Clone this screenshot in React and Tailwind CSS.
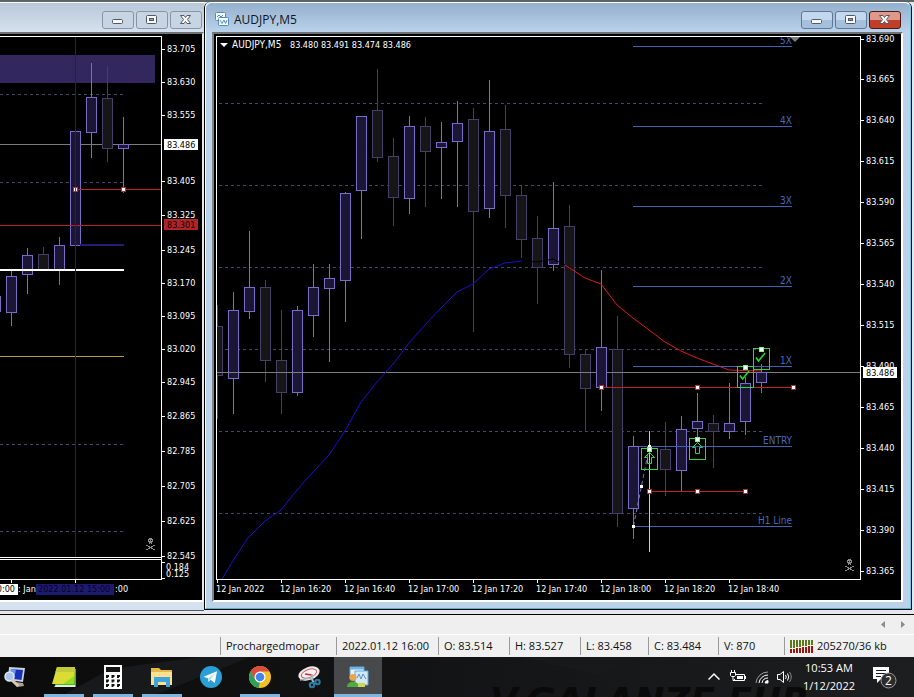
import { clsx } from "clsx";

const hourCandles = [
  { x: -5, high: 296, top: 296, bottom: 311, low: 311, up: true },
  { x: 11, high: 270, top: 276, bottom: 312, low: 325, up: true },
  { x: 27, high: 248, top: 255, bottom: 274, low: 293, up: true },
  { x: 43, high: 247, top: 254, bottom: 269, low: 269, up: false },
  { x: 59, high: 237, top: 245, bottom: 269, low: 284, up: true },
  { x: 75, high: 131, top: 131, bottom: 245, low: 245, up: true },
  { x: 91, high: 63, top: 97, bottom: 132, low: 157, up: true },
  { x: 107, high: 66, top: 98, bottom: 148, low: 161, up: false },
  { x: 123, high: 117, top: 144, bottom: 148, low: 192, up: true },
];

const m5Candles = [
  { x: 217, high: 305, top: 326, bottom: 375, low: 418, up: false },
  { x: 233, high: 292, top: 310, bottom: 378, low: 413, up: true },
  { x: 249, high: 231, top: 287, bottom: 311, low: 318, up: true },
  { x: 265, high: 280, top: 287, bottom: 360, low: 381, up: false },
  { x: 281, high: 310, top: 360, bottom: 392, low: 413, up: false },
  { x: 297, high: 306, top: 310, bottom: 392, low: 395, up: true },
  { x: 313, high: 264, top: 287, bottom: 315, low: 336, up: true },
  { x: 329, high: 264, top: 278, bottom: 288, low: 361, up: true },
  { x: 345, high: 192, top: 193, bottom: 280, low: 321, up: true },
  { x: 361, high: 116, top: 116, bottom: 190, low: 238, up: true },
  { x: 377, high: 69, top: 110, bottom: 157, low: 161, up: false },
  { x: 393, high: 138, top: 156, bottom: 197, low: 225, up: false },
  { x: 409, high: 116, top: 126, bottom: 198, low: 213, up: true },
  { x: 425, high: 117, top: 126, bottom: 151, low: 206, up: false },
  { x: 441, high: 122, top: 142, bottom: 147, low: 198, up: true },
  { x: 457, high: 101, top: 123, bottom: 141, low: 206, up: true },
  { x: 473, high: 108, top: 119, bottom: 211, low: 331, up: false },
  { x: 489, high: 80, top: 131, bottom: 208, low: 217, up: true },
  { x: 505, high: 105, top: 129, bottom: 195, low: 227, up: false },
  { x: 521, high: 186, top: 195, bottom: 239, low: 257, up: false },
  { x: 537, high: 216, top: 238, bottom: 267, low: 303, up: false },
  { x: 553, high: 182, top: 228, bottom: 264, low: 270, up: true },
  { x: 569, high: 205, top: 226, bottom: 354, low: 367, up: false },
  { x: 585, high: 350, top: 354, bottom: 388, low: 430, up: false },
  { x: 601, high: 270, top: 347, bottom: 387, low: 410, up: true },
  { x: 617, high: 316, top: 349, bottom: 513, low: 526, up: false },
  { x: 633, high: 436, top: 446, bottom: 508, low: 538, up: true },
  { x: 665, high: 422, top: 449, bottom: 469, low: 495, up: false },
  { x: 681, high: 416, top: 429, bottom: 470, low: 491, up: true },
  { x: 697, high: 393, top: 421, bottom: 428, low: 438, up: true },
  { x: 713, high: 415, top: 423, bottom: 431, low: 467, up: false },
  { x: 729, high: 383, top: 423, bottom: 431, low: 438, up: true },
  { x: 745, high: 377, top: 383, bottom: 421, low: 434, up: true },
  { x: 761, high: 364, top: 372, bottom: 382, low: 392, up: true },
];

const targets = [
  { y: 46, label: "5X" },
  { y: 126, label: "4X" },
  { y: 206, label: "3X" },
  { y: 286, label: "2X" },
  { y: 366, label: "1X" },
  { y: 446, label: "ENTRY" },
  { y: 526, label: "H1 Line" },
];

const hourPrices = [
  [49, "83.705"],
  [82, "83.630"],
  [115, "83.555"],
  [181, "83.405"],
  [215, "83.325"],
  [250, "83.245"],
  [283, "83.170"],
  [316, "83.095"],
  [349, "83.020"],
  [382, "82.945"],
  [416, "82.865"],
  [451, "82.785"],
  [486, "82.705"],
  [521, "82.625"],
  [556, "82.545"],
];

const m5Prices = [
  [39, "83.690"],
  [79, "83.665"],
  [120, "83.640"],
  [161, "83.615"],
  [202, "83.590"],
  [243, "83.565"],
  [284, "83.540"],
  [325, "83.515"],
  [366, "83.490"],
  [407, "83.465"],
  [448, "83.440"],
  [489, "83.415"],
  [530, "83.390"],
  [571, "83.365"],
];

const m5Times = [
  "12 Jan 2022",
  "12 Jan 16:20",
  "12 Jan 16:40",
  "12 Jan 17:00",
  "12 Jan 17:20",
  "12 Jan 17:40",
  "12 Jan 18:00",
  "12 Jan 18:20",
  "12 Jan 18:40",
];

const CHART_FONT = "font-['DejaVu_Sans_Condensed','DejaVu_Sans',sans-serif]";

const Candle = ({ x, high, top, bottom, low, up }) => {
  const stroke = up ? "#786cc8" : "#463d69";
  return (
    <g stroke={stroke}>
      <path d={`M${x + 0.5} ${high}V${top}M${x + 0.5} ${bottom}V${low + 1}`} />
      <rect
        x={x - 4.5}
        y={top + 0.5}
        width="10"
        height={bottom - top}
        fill={up ? "#1a1633" : "#161616"}
      />
    </g>
  );
};

const Level = ({ y, from, to, color, dashed }) => (
  <path
    d={`M${from} ${y + 0.5}H${to}`}
    stroke={color}
    strokeDasharray={dashed ? "3 3" : undefined}
  />
);

const Handle = ({ x, y, color = "#b03030" }) => (
  <rect x={x - 1.5} y={y - 1.5} width="4" height="4" fill="#fff" stroke={color} />
);

const SignalBox = ({ x, y, kind }) => (
  <g transform={`translate(${x} ${y})`} fill="none" stroke="#22e032">
    <rect x="0.5" y="0.5" width="16" height="21" />
    {kind === "arrow" ? (
      <path d="M8.5 4.5L13.5 9.5H10.5V15.5H6.5V9.5H3.5Z" />
    ) : (
      <path d="M3 9.5L5.5 13L12 5M4 11L5.5 13" strokeWidth="1.5" />
    )}
    <rect x="6.5" y="-0.5" width="4" height="4" fill="#fff" stroke="#7df58a" />
  </g>
);

const Skull = ({ x, y }) => (
  <g transform={`translate(${x} ${y})`}>
    <path
      d="M3 0H6V1H7V4H6V6H3V4H2V1H3ZM0 7H2V8H0ZM7 7H9V8H7ZM2 8H4V9H2ZM5 8H7V9H5ZM3 9H6V10H3ZM2 10H4V11H2ZM5 10H7V11H5ZM0 11H2V12H0ZM7 11H9V12H7Z"
      fill="#8d8d8d"
    />
    <path d="M3 2H4V3H3ZM5 2H6V3H5ZM4 5H5V6H4Z" fill="#000" />
  </g>
);

const PriceAxis = ({ prices, current, alert }) => (
  <svg
    className={clsx("w-10 flex-1 shrink-0 overflow-visible", CHART_FONT)}
    fontSize="9"
    fill="#fff"
    role="img"
    aria-label="Price scale"
  >
    <g transform="translate(0 -36)">
      {prices.map(([y, label]) => (
        <g key={label}>
          <path d={`M0 ${y + 0.5}h3`} stroke="#fff" />
          <text x="5" y={y + 3}>
            {label}
          </text>
        </g>
      ))}
      <rect x="2" y={current - 5} width="34" height="11" />
      <text x="5" y={current + 4} fill="#000">
        83.486
      </text>
      {alert && (
        <>
          <rect x="2" y={alert - 6} width="34" height="11" fill="#ae2429" />
          <text x="5" y={alert + 3} fill="#1a0000">
            83.301
          </text>
        </>
      )}
    </g>
  </svg>
);

const windowButtons = [
  {
    name: "Minimize",
    icon: <rect x="9.5" y="8.5" width="10" height="4" rx="1" />,
  },
  {
    name: "Maximize",
    icon: (
      <>
        <rect x="9.5" y="4.5" width="10" height="8" rx="1" />
        <rect x="12.5" y="7.5" width="4" height="2" fill="#8fa0b3" />
      </>
    ),
  },
  {
    name: "Close",
    icon: (
      <path d="M9.5 4.5H13L14.5 6.5L16 4.5H19.5L16.5 8.5L19.5 12.5H16L14.5 10.5L13 12.5H9.5L12.5 8.5Z" />
    ),
  },
];

const WindowButtons = ({ active }) => (
  <div className="flex gap-0.5">
    {windowButtons.map(({ name, icon }) => (
      <button
        key={name}
        type="button"
        aria-label={name}
        className={clsx(
          "h-[18px] w-8 overflow-hidden rounded-[3px] border",
          !active && "border-[#8696a8] bg-[#c7d5e3]",
          active &&
            name !== "Close" &&
            "border-[#5f7894] bg-linear-to-b from-[#c3d8ee] from-50% to-[#a5c0dd] to-50%",
          active &&
            name === "Close" &&
            "border-[#4a1a18] bg-linear-to-b from-[#e0988b] from-50% to-[#c23f27] to-50%",
        )}
      >
        <svg
          className="-mt-px block h-[18px] w-[30px]"
          fill="#f8f8f8"
          stroke="#4f5a66"
        >
          {icon}
        </svg>
      </button>
    ))}
  </div>
);

const HourWindow = () => (
  <section
    aria-label="Hourly chart"
    className="flex w-[204px] shrink-0 flex-col border-t border-white bg-[#d5e2ef]"
  >
    <header className="flex h-[29px] shrink-0 items-center justify-end bg-linear-to-b from-[#b8c8d8] to-[#d5e1ee] pt-1 pr-0.5">
      <WindowButtons />
    </header>
    <div className="flex flex-1 flex-col border-y-2 border-r-2 border-t-[#6f7274] border-r-[#e8e8ec] border-b-white bg-black pt-0.5">
      <div className="flex flex-1">
        <div className="flex flex-1 flex-col border-r border-white">
          <svg
            className="w-full flex-1 border-y border-white"
            fill="none"
            role="img"
            aria-label="Hourly candles"
          >
            <g transform="translate(0 -37)">
              <rect x="0" y="55" width="155" height="28" fill="#32285e" />
              {[94, 182, 444, 531].map((y) => (
                <Level key={y} y={y} from={0} to={126} color="#48466a" dashed />
              ))}
              <Level y={144} from={0} to={161} color="#7c7c7c" />
              {hourCandles.map((candle) => (
                <Candle key={candle.x} {...candle} />
              ))}
              <path d="M80 245H124" stroke="#231d78" strokeWidth="2" />
              <path d="M0 270H124" stroke="#fff" strokeWidth="2" />
              <Level y={356} from={0} to={124} color="#b5a13c" />
              <Level y={189} from={75} to={161} color="#b8202e" />
              <Level y={225} from={0} to={161} color="#b8202e" />
              <path d="M75.5 36V560" stroke="#221a80" />
              <Handle x={75} y={189} />
              <path d="M75.5 187V192" stroke="#a33a3a" />
              <Handle x={123} y={189} />
              <Skull x={146} y={538} />
            </g>
          </svg>
          <svg
            className="mt-px h-[21px] w-full shrink-0 border-y border-white"
            role="img"
            aria-label="Indicator"
          >
            <path d="M75.5 0V21" stroke="#221a80" />
          </svg>
        </div>
        <div className="flex w-10 flex-col">
          <PriceAxis prices={hourPrices} current={144} alert={225} />
          <svg
            className={clsx("h-5 w-10 shrink-0", CHART_FONT)}
            fontSize="9"
            fill="#fff"
          >
            <path d="M0 2.5h3M0 18.5h3" stroke="#fff" />
            <text x="4" y="10">
              0.184
            </text>
            <text x="4" y="17">
              0.125
            </text>
          </svg>
        </div>
      </div>
      <svg
        className={clsx("h-5 w-full shrink-0", CHART_FONT)}
        fontSize="9"
        fill="#fff"
        role="img"
        aria-label="Time scale"
      >
        <path d="M11.5 0V3M75.5 0V3" stroke="#fff" />
        <rect x="0" y="4" width="18" height="11" />
        <text x="15" y="12" fill="#000" textAnchor="end">
          0:00
        </text>
        <text x="18" y="12">
          : Jan
        </text>
        <rect x="36" y="4" width="78" height="11" fill="#1e1a70" />
        <text x="38" y="12" fill="#05041f">
          2022.01.12 15:00
        </text>
        <text x="115" y="12">
          :00
        </text>
      </svg>
    </div>
    <div className="h-[9px] shrink-0 border-b border-[#4d5a66]" />
  </section>
);

const M5Window = () => (
  <section
    aria-label="AUDJPY,M5"
    className="mr-0.5 flex min-w-0 flex-1 flex-col rounded-t-md border-x border-b border-black bg-[#bad2ea]"
  >
    <div className="flex flex-1 flex-col rounded-t-md border border-t-white border-r-[#5fd0ee] border-b-[#4fb4cc] border-l-white">
      <header className="flex h-[29px] shrink-0 items-center rounded-t-md bg-linear-to-b from-[#95b0cd] to-[#bad2eb] pt-1 pr-[9px] pl-2">
        <svg className="h-4 w-4 shrink-0" fill="#fff" stroke="#4f8cc8">
          <rect x="1.5" y="0.5" width="10" height="8" rx="1" />
          <path d="M3 5L5 3L7 5L9 3" fill="none" />
          <rect x="4.5" y="5.5" width="10" height="8" rx="1" />
          <path d="M6 8L8 11.5L10 8L11.5 11.5L13 8" fill="none" />
        </svg>
        <h1 className="ml-1 flex-1 font-['Open_Sans',sans-serif] text-[12px] leading-4 text-[#0d1520]">
          AUDJPY,M5
        </h1>
        <WindowButtons active />
      </header>
      <div className="mr-[7px] mb-1.5 ml-1.5 flex flex-1 flex-col border-2 border-t-[#6f7274] border-r-white border-b-white border-l-[#7d8287] bg-black pt-0.5 pl-0.5">
        <div className="flex flex-1">
          <svg
            className={clsx("min-w-0 flex-1 border border-white", CHART_FONT)}
            fill="none"
            fontSize="9"
            role="img"
            aria-label="AUDJPY five minute candles"
          >
            <g transform="translate(-217 -37)">
              {[103, 185, 267, 349, 431, 513].map((y) => (
                <Level key={y} y={y} from={219} to={763} color="#48466a" dashed />
              ))}
              {m5Candles.map((candle) => (
                <Candle key={candle.x} {...candle} />
              ))}
              <path d="M217 372.5H2000" stroke="#7c7c7c" />
              <g>
                <Candle x={601} high={347} top={347} bottom={387} low={387} up />
                <Candle x={745} high={383} top={383} bottom={421} low={421} up />
                <Candle x={761} high={372} top={372} bottom={382} low={382} up />
              </g>
              <polyline
                points="222,579 233,561 247,539 265,521 281,510 297,490 313,472 329,455 345,431 361,402 377,382 393,364 409,343 425,325 441,308 457,292 473,284 489,269 505,263 522,261"
                stroke="#1612d0"
              />
              <polyline points="522,261 537,262 553,259 565,265" stroke="#000" />
              <polyline
                points="565,265 585,278 601,284 617,305 633,318 649,330 665,342 681,351 697,358 713,364 729,370 761,371"
                stroke="#e01820"
              />
              {targets.map(({ y, label }) => (
                <g key={label}>
                  <Level
                    y={y}
                    from={label === "ENTRY" ? 639 : 633}
                    to={792}
                    color="#3f62b4"
                  />
                  <text
                    x="792"
                    y={y - 2}
                    fontSize="10"
                    textAnchor="end"
                    fill="#4a68bd"
                  >
                    {label}
                  </text>
                </g>
              ))}
              <Level y={387} from={601} to={794} color="#c4202c" />
              <Level y={491} from={649} to={746} color="#c4202c" />
              {[601, 697, 793].map((x) => (
                <Handle key={x} x={x} y={387} />
              ))}
              <path
                d="M633.5 526L649.5 446"
                stroke="#7d74b8"
                strokeDasharray="4 3"
              />
              <path d="M649.5 431V552" stroke="#c9c9c9" />
              {[649, 697, 745].map((x) => (
                <Handle key={x} x={x} y={491} />
              ))}
              <path
                d="M632 525h3v3h-3zM640 485h3v3h-3zM648 445h3v3h-3z"
                fill="#fff"
              />
              <SignalBox x={737} y={366} kind="check" />
              <SignalBox x={753} y={348} kind="check" />
              <SignalBox x={641} y={448} kind="arrow" />
              <SignalBox x={689} y={438} kind="arrow" />
              <path d="M790 37H800L795 42Z" fill="#7b7b7b" />
              <path d="M220 43H228L224 47Z" fill="#fff" />
              <text x="232" y="48" fontSize="10" fill="#fff">
                AUDJPY,M5
              </text>
              <text x="290" y="48" fill="#fff">
                83.480 83.491 83.474 83.486
              </text>
              <Skull x={845} y={559} />
            </g>
          </svg>
          <div className="flex w-10 shrink-0 flex-col">
            <PriceAxis prices={m5Prices} current={372} />
          </div>
        </div>
        <ol
          className={clsx(
            "flex h-5 shrink-0 overflow-hidden text-[9px] leading-3 whitespace-nowrap text-white",
            CHART_FONT,
          )}
        >
          {m5Times.map((time) => (
            <li key={time} className="w-16 shrink-0">
              <span className="ml-px block h-[3px] w-px bg-white" />
              {time}
            </li>
          ))}
        </ol>
      </div>
    </div>
  </section>
);

const quote = [
  { text: "Prochargedmopar", width: "w-[116px]" },
  { text: "2022.01.12 16:00", width: "w-[102px]" },
  { text: "O: 83.514", width: "w-[71px]" },
  { text: "H: 83.527", width: "w-[71px]" },
  { text: "L: 83.458", width: "w-[68px]" },
  { text: "C: 83.484", width: "w-[70px]" },
  { text: "V: 870", width: "w-[66px]" },
];

const StatusBar = () => (
  <footer className="flex h-[22px] shrink-0 items-center justify-end bg-[#f0f0f0] font-['Open_Sans',sans-serif] text-[11px] leading-[18px] whitespace-nowrap text-[#111]">
    {quote.map(({ text, width }) => (
      <span
        key={text}
        className={clsx("h-[18px] shrink-0 border-l border-[#9a9a9a] pl-[5px]", width)}
      >
        {text}
      </span>
    ))}
    <span className="flex h-[18px] w-[130px] shrink-0 items-center gap-[3px] border-l border-[#9a9a9a] pl-[5px]">
      <svg className="h-[13px] w-6 shrink-0" role="img" aria-label="Connection">
        {[0, 1, 2, 3, 4, 5, 6, 7].map((i) => (
          <g key={i}>
            <rect x={i * 3} y="0" width="2" height={8 - Math.floor(i / 2)} fill="#5b7a17" />
            <rect
              x={i * 3}
              y={9 - Math.floor(i / 2)}
              width="2"
              height={4 + Math.floor(i / 2)}
              fill="#9c1610"
            />
          </g>
        ))}
      </svg>
      205270/36 kb
    </span>
  </footer>
);

const RemoteIcon = () => (
  <svg viewBox="0 0 24 24" className="h-6 w-6">
    <path d="M7 2L23 3L21 17L6 15Z" fill="#c9d3dd" />
    <path d="M9 4L21 5L19.500 15L8 13.500Z" fill="#1830b8" />
    <path d="M9 4L14 4.400L12 14L8 13.500Z" fill="#6f96ee" />
    <path d="M13 17L21 18L22 21L15 22Z" fill="#b4a28e" />
    <circle cx="7.500" cy="11.500" r="4.500" fill="#a9c6ea" stroke="#dfe6ee" strokeWidth="1.500" />
    <path d="M10 15L16 21" stroke="#d8c9b4" strokeWidth="3" />
  </svg>
);

const NotesIcon = () => (
  <svg viewBox="0 0 24 24" className="h-6 w-6">
    <path d="M4 4H24V22H3Z" fill="#4fae2c" />
    <path d="M4 20H23V22H2Z" fill="#dfeedd" />
    <path d="M5 2H23L22 19H0Z" fill="#d9dc35" />
    <path d="M5 2H23L22.700 7H3.500Z" fill="#c2c93a" />
    <path d="M22 11L22 19H11Z" fill="#8ede1c" />
  </svg>
);

const CalculatorIcon = () => (
  <svg viewBox="0 0 18 24" className="h-6 w-[18px]">
    <path d="M0 0H18V24H0Z" fill="#fff" />
    <path
      d="M2 2H16V7H2ZM2 10H5V12H4V13H2ZM7.500 10H10.500V12H9.500V13H7.500ZM13 10H16V12H15V13H13ZM2 14.500H5V16.500H4V17.500H2ZM7.500 14.500H10.500V16.500H9.500V17.500H7.500ZM13 14.500H16V16.500H15V17.500H13ZM2 19H5V21H4V22H2ZM7.500 19H10.500V21H9.500V22H7.500ZM13 19H16V21H15V22H13Z"
      fill="#151515"
    />
  </svg>
);

const FolderIcon = () => (
  <svg viewBox="0 0 24 24" className="h-6 w-6">
    <path d="M1 3H9L11 5H22V20H1Z" fill="#e6b84c" />
    <path d="M1 7H22V20H1Z" fill="#fbe08e" />
    <path d="M4 12H20V22H16V17H8V22H4Z" fill="#3da4dc" />
  </svg>
);

const TelegramIcon = () => (
  <svg viewBox="0 0 24 24" className="h-6 w-6">
    <circle cx="12" cy="12" r="11" fill="#2a9fd6" />
    <path d="M4.500 11.800L18 6.300L15.800 18L11.500 14.800L9.500 16.800L9 13.300Z" fill="#fff" />
    <path d="M9 13.300L16 8.200L11.500 14.800L9.500 16.800Z" fill="#b9dcef" />
  </svg>
);

const ChromeIcon = () => (
  <svg viewBox="0 0 24 24" className="h-6 w-6">
    <circle cx="12" cy="12" r="11" fill="#f2c022" />
    <path d="M2.500 6.500A11 11 0 0 1 21.500 6.500H12L7.200 14.700Z" fill="#dd4b3e" />
    <path d="M2.500 6.500L7.300 14.700L12 17.500L10.500 22.900A11 11 0 0 1 2.500 6.500Z" fill="#2f9f58" />
    <circle cx="12" cy="12" r="5.500" fill="#fff" />
    <circle cx="12" cy="12" r="4.300" fill="#4285f0" />
  </svg>
);

const SnipIcon = () => (
  <svg viewBox="0 0 24 24" className="h-6 w-6">
    <ellipse cx="12" cy="8.500" rx="11" ry="6.500" transform="rotate(-20 12 8.500)" fill="#efe9e9" />
    <ellipse
      cx="12"
      cy="8.500"
      rx="8"
      ry="4"
      transform="rotate(-20 12 8.500)"
      fill="#f7f2f2"
      stroke="#c9656a"
      strokeWidth="1"
    />
    <path d="M8 9L15 10" stroke="#b8343b" strokeWidth="1.500" />
    <path d="M3 15L13 13L17 17M15 9L16 18" stroke="#a9b5bf" strokeWidth="1.500" fill="none" />
    <g fill="none" stroke="#2a7ea6" strokeWidth="2">
      <circle cx="15" cy="20" r="2.200" />
      <circle cx="20.500" cy="17" r="2.200" />
    </g>
  </svg>
);

const TraderIcon = () => (
  <svg viewBox="0 0 24 24" className="h-6 w-6">
    <path d="M4 2H18V14H4Z" fill="#e4f1fa" stroke="#5ea4d8" />
    <path d="M4 2H18V4.500H4Z" fill="#6fb3e2" />
    <path d="M9 6H22V20H9Z" fill="#d3e8f6" stroke="#66aadb" />
    <path d="M11 13L13 9L15 14L17 9L20 14" fill="none" stroke="#5296cd" />
    <path d="M1 22C1 15 13 15 13 22Z" fill="#4cae3e" />
    <circle cx="7" cy="12.500" r="3.500" fill="#e8a54d" />
    <path d="M12 18H19V22H12Z" fill="#cfd65a" />
  </svg>
);

const apps = [
  { name: "Remote Desktop", icon: <RemoteIcon />, first: true },
  { name: "Sticky Notes", icon: <NotesIcon />, running: true },
  { name: "Calculator", icon: <CalculatorIcon />, running: true },
  { name: "File Explorer", icon: <FolderIcon />, running: true },
  { name: "Telegram", icon: <TelegramIcon /> },
  { name: "Chrome", icon: <ChromeIcon />, running: true },
  { name: "Snipping Tool", icon: <SnipIcon /> },
  { name: "MetaTrader", icon: <TraderIcon />, running: true, active: true },
];

const Taskbar = () => (
  <nav
    aria-label="Taskbar"
    className="relative flex h-10 shrink-0 justify-between overflow-hidden bg-linear-to-r from-[#0b0b0c] to-[#1d1e1f] font-['Open_Sans',sans-serif] text-white"
  >
    <svg
      className="absolute inset-0 h-full w-full font-['DejaVu_Sans',sans-serif]"
      aria-hidden="true"
    >
      <path d="M60 40L110 12L200 0H250L150 40ZM520 0L600 18L640 0M420 40L560 6" fill="#18191a" />
      <text
        x="490"
        y="56"
        fontSize="36"
        fontStyle="italic"
        fontWeight="700"
        fill="#0a0a0a"
      >
        V.GALANZE FUR
      </text>
    </svg>
    <div className="relative flex gap-px">
      {apps.map(({ name, icon, running, active, first }) => (
        <button
          key={name}
          type="button"
          aria-label={name}
          className={clsx(
            "flex h-10 flex-col items-center pt-2",
            first ? "w-[39px] pr-3" : "w-12",
            active && "bg-[#48494b]",
          )}
        >
          {icon}
          {running && (
            <span
              className={clsx("mt-auto h-[3px] bg-[#7db4e0]", active ? "w-12" : "w-10")}
            />
          )}
        </button>
      ))}
    </div>
    <div className="relative flex items-center pr-[17px]">
      <button type="button" aria-label="Show hidden icons" className="mr-2.5">
        <svg className="block h-4 w-3" fill="none" stroke="#fff" strokeWidth="1.500">
          <path d="M0.500 10.500L6 5L11.500 10.500" />
        </svg>
      </button>
      <svg className="mr-2 h-4 w-[17px]" fill="none" stroke="#fff" role="img" aria-label="Battery">
        <path d="M6 5.500H14.500V11.500H4.500V10M15.500 7V10M1.500 1V4M4.500 1V4M0.500 3.500H5.500V6.500L4.500 7.500H1.500L0.500 6.500ZM3 8V11.500H5" />
        <path d="M7 7H13V10H7Z" fill="#fff" stroke="none" />
      </svg>
      <svg className="mr-2 h-4 w-[14px]" fill="none" stroke="#fff" role="img" aria-label="Wi-Fi">
        <path d="M1 14A12 12 0 0 1 13 3" stroke="#a0a0a0" />
        <path d="M4 14A9 9 0 0 1 13 6M7 14A6 6 0 0 1 13 9" />
        <path d="M10 14A3 3 0 0 1 13 11.500V14Z" fill="#fff" />
      </svg>
      <svg className="mr-2.5 h-4 w-4" fill="none" stroke="#fff" role="img" aria-label="Volume">
        <path d="M0.500 5.500H3L6.500 2.500V13.500L3 10.500H0.500Z" />
        <path d="M8.500 6Q10 8 8.500 10M10.500 4.500Q13 8 10.500 11.500" />
        <path d="M12.500 3Q16 8 12.500 13" stroke="#8b8b8b" />
      </svg>
      <div className="mr-[18px] text-center text-[11px] leading-[18px]">
        <div>10:53 AM</div>
        <div>1/12/2022</div>
      </div>
      <button type="button" aria-label="2 notifications" className="h-6 w-6">
        <svg className="block h-6 w-6">
          <path d="M0 2H16V14H8L4 18V14H0Z" fill="#fff" />
          <path d="M3 5.500H13M3 8.500H13M3 11.500H8" stroke="#1b1b1b" />
          <circle cx="15.500" cy="15.500" r="7.500" fill="#2b2c2e" stroke="#9a9a9a" />
          <text x="15.500" y="20" fontSize="12" textAnchor="middle" fill="#fff">
            2
          </text>
        </svg>
      </button>
    </div>
  </nav>
);

const App = () => (
  <main className="flex min-h-screen flex-col overflow-hidden bg-[#f0f0f0]">
    <div className="flex flex-1 border-t-2 border-[#5b6467] bg-[#e9e7ec]">
      <div className="flex min-w-0 flex-1 border-b border-black">
        <div className="mb-[3px] flex">
          <HourWindow />
        </div>
        <div className="mb-1 flex min-w-0 flex-1">
          <M5Window />
        </div>
      </div>
    </div>
    <div className="flex h-5 shrink-0 items-center justify-end gap-3 border-b border-white bg-[#efefef] pr-2">
      <button type="button" aria-label="Scroll left">
        <svg className="block h-[7px] w-[7px]">
          <path d="M5 0V7L1 3.500Z" fill="#8b8b8b" />
        </svg>
      </button>
      <button type="button" aria-label="Scroll right">
        <svg className="block h-[7px] w-[7px]">
          <path d="M2 0V7L6 3.500Z" fill="#8b8b8b" />
        </svg>
      </button>
    </div>
    <StatusBar />
    <Taskbar />
  </main>
);

export default App;
